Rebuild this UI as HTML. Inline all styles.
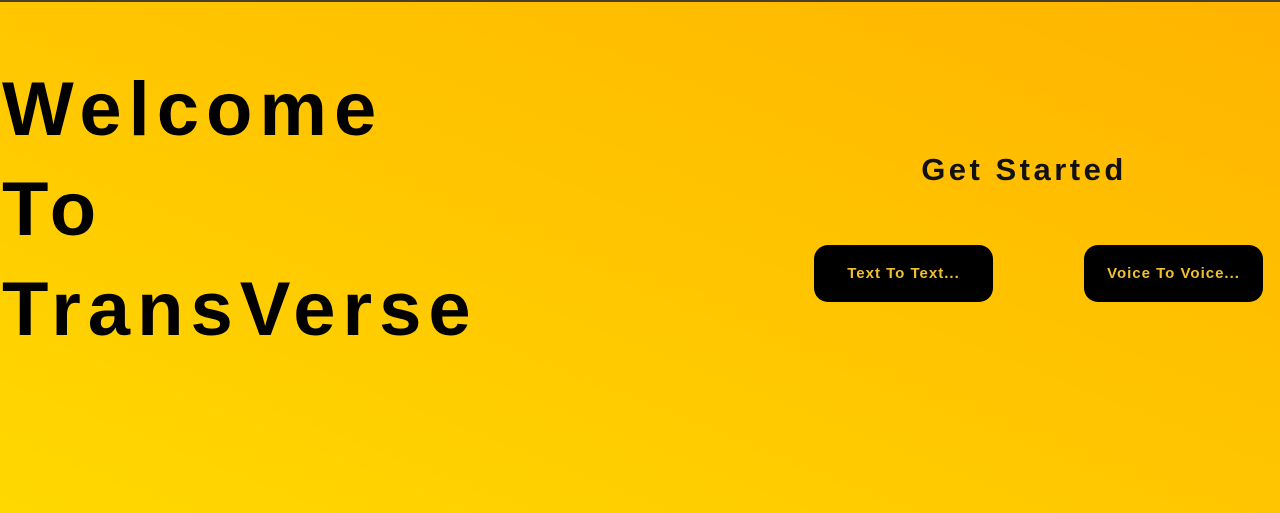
<!DOCTYPE html>
<html><head><style>
html,body{margin:0;padding:0;}
body{width:1280px;height:513px;overflow:hidden;position:relative;
background:linear-gradient(to top right,#ffd800 0%,#ffc800 45%,#ffb400 100%);
font-family:"Comic Sans MS","Liberation Sans",sans-serif;border-top:2px solid #4a3f2a;box-sizing:border-box;}
.h{position:absolute;left:2px;font-size:76px;font-weight:bold;letter-spacing:7px;color:#000;line-height:1;}
.gs{position:absolute;left:904px;top:150px;width:240px;text-align:center;font-size:31px;font-weight:bold;letter-spacing:3.5px;color:#111;}
.b{position:absolute;top:243px;width:179px;height:57px;background:#000;border-radius:14px;color:#f0c030;font-size:15px;font-weight:bold;letter-spacing:1px;display:flex;align-items:center;justify-content:center;}
</style></head><body>
<div class="h" style="top:70px">Welcome</div>
<div class="h" style="top:170px">To</div>
<div class="h" style="top:270px">TransVerse</div>
<div class="gs">Get Started</div>
<div class="b" style="left:814px">Text To Text...</div>
<div class="b" style="left:1084px">Voice To Voice...</div>
</body></html>
